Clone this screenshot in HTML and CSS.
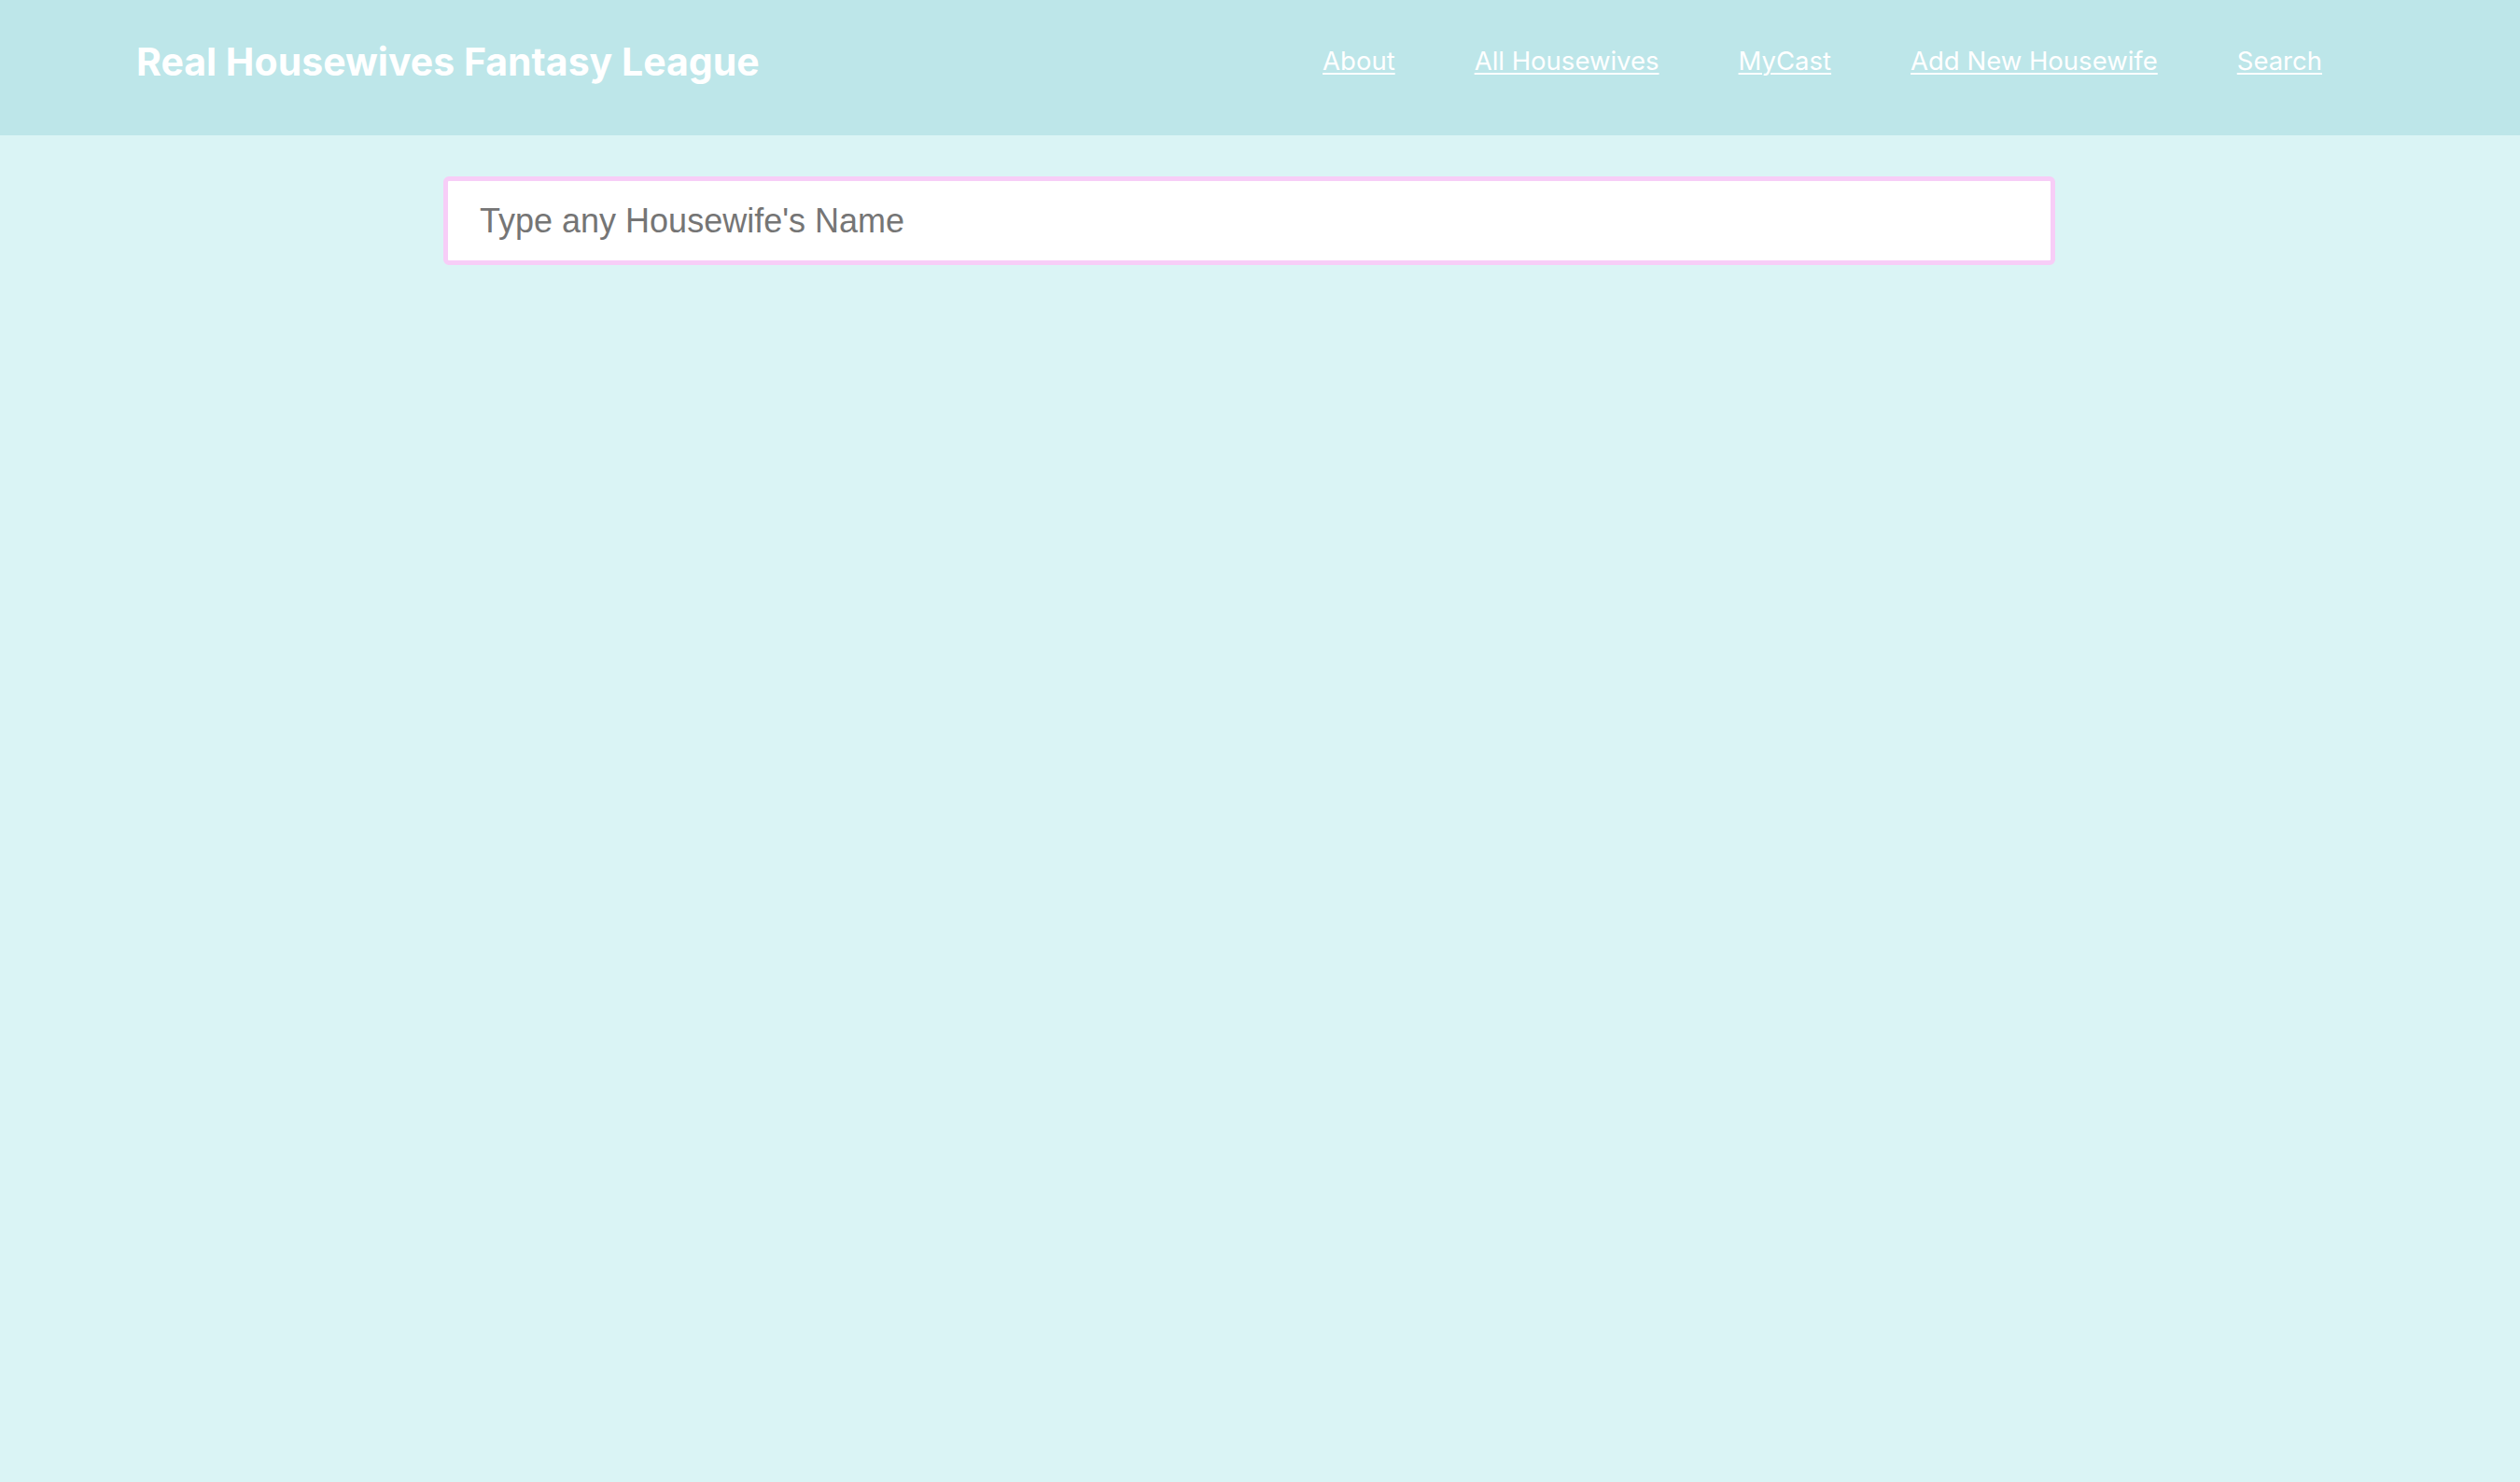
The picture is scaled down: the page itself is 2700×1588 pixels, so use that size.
FILE: index.html
```html
<!DOCTYPE html>
<html lang="en">
<head>
<meta charset="utf-8">
<title>Real Housewives Fantasy League</title>
<link rel="stylesheet" href="styles.css">
</head>
<body>
<header class="topbar">
  <h1 class="brand">Real Housewives Fantasy League</h1>
  <nav class="nav">
    <a href="#" class="nav-link">About</a>
    <a href="#" class="nav-link">All Housewives</a>
    <a href="#" class="nav-link">MyCast</a>
    <a href="#" class="nav-link">Add New Housewife</a>
    <a href="#" class="nav-link">Search</a>
  </nav>
</header>
<main class="content">
  <input class="search-input" type="text" placeholder="Type any Housewife's Name">
</main>
</body>
</html>
```

FILE: styles.css
```css
html, body {
  margin: 0;
  padding: 0;
}
body {
  background: #daf4f5;
  min-height: 1588px;
  font-family: Inter, "Liberation Sans", sans-serif;
}
.topbar {
  height: 145px;
  box-sizing: border-box;
  background: #bde6e9;
  display: flex;
  align-items: center;
  justify-content: space-between;
  padding: 0 212px 0 146px;
}
.brand {
  margin: 0 0 14px 0;
  color: #ffffff;
  font-size: 41px;
  font-weight: 700;
  letter-spacing: 0;
}
.nav {
  display: flex;
  gap: 85px;
  margin-bottom: 15px;
}
.nav-link {
  color: #ffffff;
  font-size: 27.5px;
  font-weight: 400;
  text-decoration: underline;
  text-decoration-thickness: 2px;
  text-underline-offset: 3px;
}
.content {
  padding: 44px 0 0 475px;
}
.search-input {
  display: block;
  width: 1727px;
  height: 95px;
  box-sizing: border-box;
  border: 5px solid #f7cdf7;
  border-radius: 6px;
  background: #ffffff;
  padding: 0 34px;
  font-family: "Liberation Sans", Arial, sans-serif;
  font-size: 36px;
  color: #333;
  outline: none;
}
.search-input::placeholder {
  color: #757575;
}
```
